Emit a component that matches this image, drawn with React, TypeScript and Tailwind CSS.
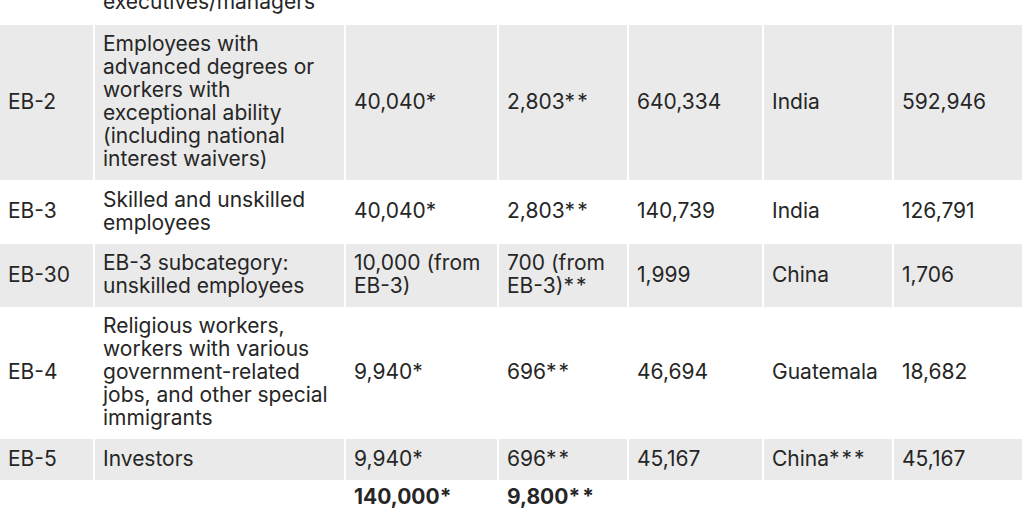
const cols = 'grid grid-cols-[93px_249px_151px_128px_133px_128px_128px] gap-[2px] w-[1022px]';

type Row = { h: string; gray: boolean; total?: boolean; cells: (string | string[])[] };

const rows: Row[] = [
    { h: 'h-[40px]', gray: false, cells: ['', ['executives/managers'], '', '', '', '', ''] },
    {
        h: 'h-[155px]',
        gray: true,
        cells: [
            'EB-2',
            ['Employees with', 'advanced degrees or', 'workers with', 'exceptional ability', '(including national', 'interest waivers)'],
            '40,040*',
            '2,803**',
            '640,334',
            'India',
            '592,946',
        ],
    },
    {
        h: 'h-[60px]',
        gray: false,
        cells: ['EB-3', ['Skilled and unskilled', 'employees'], '40,040*', '2,803**', '140,739', 'India', '126,791'],
    },
    {
        h: 'h-[63px]',
        gray: true,
        cells: ['EB-30', ['EB-3 subcategory:', 'unskilled employees'], ['10,000 (from', 'EB-3)'], ['700 (from', 'EB-3)**'], '1,999', 'China', '1,706'],
    },
    {
        h: 'h-[128px]',
        gray: false,
        cells: [
            'EB-4',
            ['Religious workers,', 'workers with various', 'government-related', 'jobs, and other special', 'immigrants'],
            '9,940*',
            '696**',
            '46,694',
            'Guatemala',
            '18,682',
        ],
    },
    {
        h: 'h-[41px]',
        gray: true,
        cells: ['EB-5', 'Investors', '9,940*', '696**', '45,167', 'China***', '45,167'],
    },
    { h: 'h-[30px]', gray: false, total: true, cells: ['', '', '140,000*', '9,800**', '', '', ''] },
];

// asterisks in the source are set loose, so space them out a little
const withStars = (text: string) => {
    const m = text.match(/^(.*?)(\*+)$/);
    if (!m) return text;
    return (
        <>
            {m[1]}
            <span className="tracking-[2px]">{m[2]}</span>
        </>
    );
};

const Cell = ({ value, gray, total }: { value: string | string[]; gray: boolean; total?: boolean }) => (
    <div
        className={`flex px-2 ${gray ? 'bg-[#eaeaea]' : 'bg-white'} ${
            total ? 'items-start pt-[3px] font-bold' : 'items-center pb-[3px] font-normal'
        }`}
    >
        <div className="whitespace-nowrap">
            {Array.isArray(value)
                ? value.map((line, i) => <div key={i}>{withStars(line)}</div>)
                : withStars(value)}
        </div>
    </div>
);

export default function App() {
    return (
        <div className="h-[512px] w-[1024px] overflow-hidden bg-white text-[#262626] text-[21px] leading-[23px] font-['Inter',sans-serif]">
            <div className="flex flex-col gap-[2px] mt-[-17px]">
                {rows.map((row, r) => (
                    <div key={r} className={`${cols} ${row.h}`}>
                        {row.cells.map((c, i) => (
                            <Cell key={i} value={c} gray={row.gray} total={row.total} />
                        ))}
                    </div>
                ))}
            </div>
        </div>
    );
}
